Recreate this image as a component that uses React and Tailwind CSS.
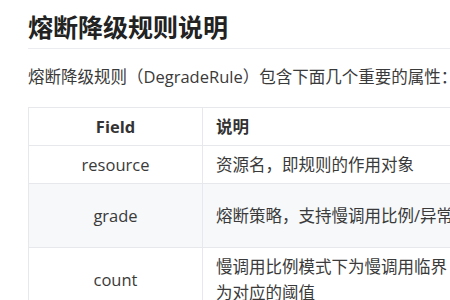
export default function App() {
  return (
    <div className="w-[450px] h-[300px] overflow-hidden bg-white font-['Open_Sans','Noto_Sans_CJK_SC',sans-serif] text-[#333]">
      <div className="pl-[28px] w-[760px]">
        <div className="pt-[12px] pb-[5px] border-b border-[#eaecef] w-[422px]">
          <h1 className="text-[25px] leading-[31px] font-bold text-[#222]">熔断降级规则说明</h1>
        </div>
        <p className="mt-[15px] text-[16.5px] leading-[26px] whitespace-nowrap text-[#3a3a3a]">熔断降级规则（DegradeRule）包含下面几个重要的属性：</p>
        <table className="mt-[17px] w-[714px] table-fixed border-collapse text-[16.5px] leading-[26px] text-[#3a3a3a]">
          <colgroup>
            <col className="w-[174px]" />
            <col className="w-[540px]" />
          </colgroup>
          <thead>
            <tr className="h-[38px] bg-white">
              <th className="border border-[#e6e8eb] px-[13px] text-center font-bold text-[#333]">Field</th>
              <th className="border border-[#e6e8eb] px-[13px] text-left font-bold text-[#333]">说明</th>
            </tr>
          </thead>
          <tbody>
            <tr className="h-[38px] bg-white">
              <td className="border border-[#e6e8eb] px-[13px] text-center">resource</td>
              <td className="border border-[#e6e8eb] px-[13px]">资源名，即规则的作用对象</td>
            </tr>
            <tr className="h-[64px] bg-[#f6f8fa]">
              <td className="border border-[#e6e8eb] px-[13px] text-center">grade</td>
              <td className="border border-[#e6e8eb] px-[13px] whitespace-nowrap">熔断策略，支持慢调用比例/异常比例/异常数策略</td>
            </tr>
            <tr className="h-[64px] bg-white">
              <td className="border border-[#e6e8eb] px-[13px] py-[6px] text-center">count</td>
              <td className="border border-[#e6e8eb] px-[13px] py-[6px]">
                <div className="whitespace-nowrap">慢调用比例模式下为慢调用临界 RT（超出该值计为慢调用）</div>
                <div>为对应的阈值</div>
              </td>
            </tr>
          </tbody>
        </table>
      </div>
    </div>
  );
}
